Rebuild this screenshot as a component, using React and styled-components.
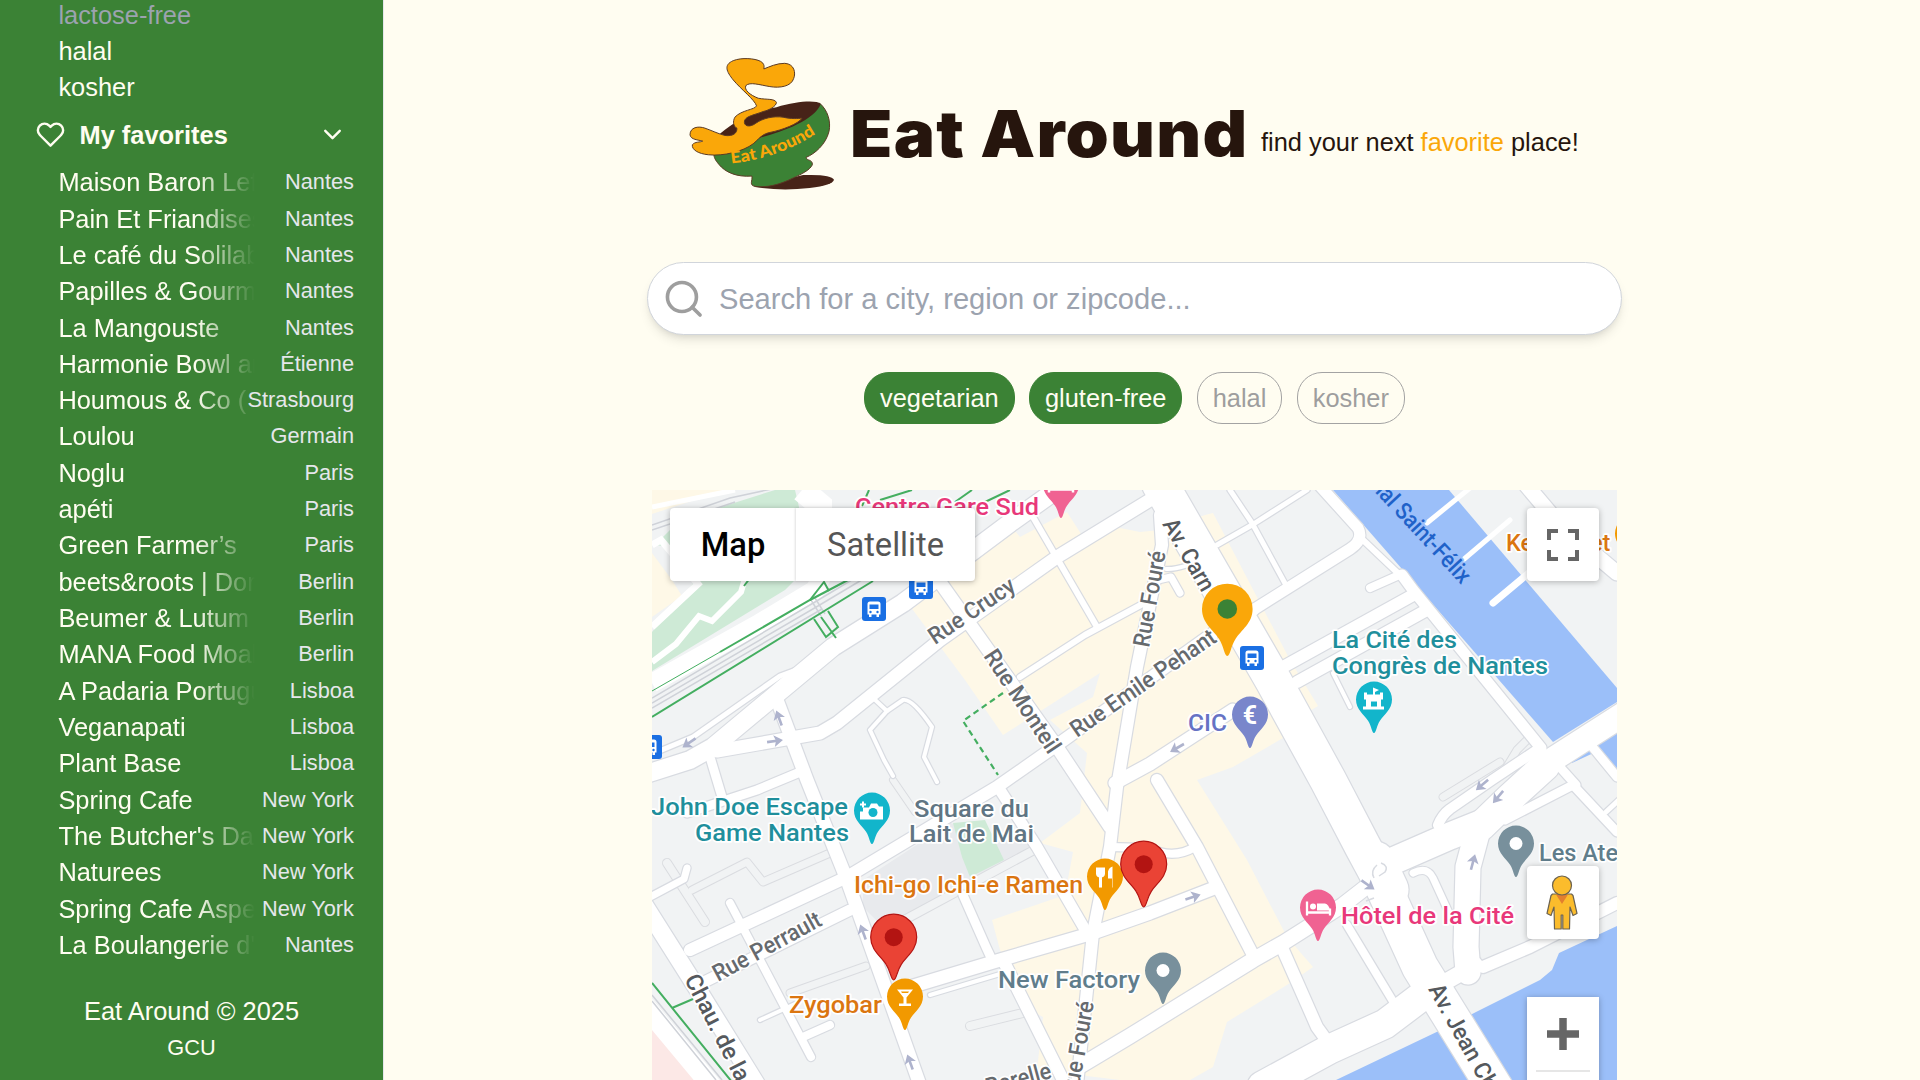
import React from 'react';
import styled, { createGlobalStyle } from 'styled-components';

const green = '#3b8235';
const cream = '#fffdf1';
const orange = '#faa709';
const dark = '#26150d';

const GlobalStyle = createGlobalStyle`
  * { box-sizing: border-box; }
  html, body { margin: 0; padding: 0; height: 1080px; overflow: hidden; }
  body {
    background: ${cream};
    font-family: "Liberation Sans", Arial, sans-serif;
    font-size: 25.41px;
    line-height: 36.33px;
  }
`;

const Page = styled.div`
  display: flex;
  height: 1080px;
  overflow: hidden;
`;

const Sidebar = styled.aside`
  width: 384px;
  flex: none;
  display: flex;
  flex-direction: column;
  background: ${green};
  border-right: 1px solid #e5e7eb;
  color: ${cream};
`;

const DietList = styled.ul`
  list-style: none;
  margin: -3.4px 0 0;
  padding: 0 0 0 58.4px;
`;

const Diet = styled.li`
  color: ${(p) => (p.$muted ? '#9ca3af' : cream)};
`;

const SectionHeader = styled.div`
  display: flex;
  align-items: center;
  height: 58.6px;
  padding: 0 36px;
  font-weight: 700;
`;

const SectionTitle = styled.span`
  flex: 1;
  padding-left: 14.5px;
`;

const Favorites = styled.ul`
  list-style: none;
  margin: 0;
  padding: 0 29px 0 58.4px;
`;

const Favorite = styled.li`
  display: grid;
  grid-template-columns: 2fr minmax(0, 1fr);
  align-items: center;
  height: 36.33px;
`;

const PlaceName = styled.span`
  min-width: 0;
  overflow: hidden;
  white-space: nowrap;
  mask-image: linear-gradient(to right, #000 70%, transparent);
`;

const PlaceCity = styled.span`
  display: flex;
  justify-content: flex-end;
  white-space: nowrap;
  font-size: 21.78px;
  color: #e5e7eb;
`;

const Footer = styled.footer`
  display: flex;
  flex-direction: column;
  align-items: center;
  padding-top: 30px;
`;

const Terms = styled.span`
  font-size: 21.78px;
`;

const Main = styled.main`
  flex: 1;
  display: flex;
  flex-direction: column;
  align-items: center;
  padding-right: 35px;
`;

const Header = styled.header`
  display: flex;
  align-items: flex-start;
  width: 899px;
  height: 262px;
  padding-top: 55px;
`;

const Title = styled.h1`
  margin: 36px 0 0 12px;
  width: 396px;
  flex: none;
  white-space: nowrap;
  font-family: Inter, "Liberation Sans", sans-serif;
  font-weight: 900;
  font-size: 65px;
  line-height: 85px;
  letter-spacing: 1.2px;
  color: ${dark};
  transform: scaleX(1.064);
  transform-origin: left;
`;

const Tagline = styled.p`
  margin: 69px 0 0 15px;
  white-space: nowrap;
  color: ${dark};
`;

const Accent = styled.span`
  color: ${orange};
`;

const SearchBox = styled.div`
  display: flex;
  align-items: center;
  width: 975px;
  height: 73px;
  padding-left: 13.5px;
  border: 1px solid #d1d5db;
  border-radius: 37px;
  background: #fff;
  box-shadow: 0 7px 11px -2px rgba(0, 0, 0, 0.1), 0 4px 7px -4px rgba(0, 0, 0, 0.1);
`;

const SearchInput = styled.input`
  flex: 1;
  margin-left: 14px;
  padding: 2px 0 0;
  border: 0;
  outline: 0;
  background: transparent;
  font: 29.1px "Liberation Sans", Arial, sans-serif;
  &::placeholder { color: #9ca3af; opacity: 1; }
`;

const Chips = styled.div`
  display: flex;
  gap: 14.5px;
  margin: 37px 0 66px;
`;

const Chip = styled.span`
  height: 52px;
  padding: 7.4px 14.9px;
  border: 1px solid ${(p) => (p.$on ? green : '#a3a3a3')};
  border-radius: 25px;
  background: ${(p) => (p.$on ? green : 'transparent')};
  color: ${(p) => (p.$on ? cream : '#9e9e9e')};
`;

const MapFrame = styled.section`
  position: relative;
  width: 965px;
  height: 590px;
  overflow: hidden;
`;

const MapCanvas = styled.svg`
  display: block;
`;

const MapTypes = styled.div`
  position: absolute;
  top: 18px;
  left: 18px;
  display: flex;
  height: 73px;
  border-radius: 4px;
  background: #fff;
  box-shadow: 0 1px 6px rgba(0, 0, 0, 0.28);
`;

const MapType = styled.span`
  display: flex;
  align-items: center;
  justify-content: center;
  width: ${(p) => (p.$active ? 126 : 179)}px;
  padding-top: 2px;
  font-family: Roboto, sans-serif;
  font-size: 32.67px;
  font-weight: ${(p) => (p.$active ? 500 : 400)};
  color: ${(p) => (p.$active ? '#000' : '#565656')};
  box-shadow: ${(p) => (p.$active ? 'none' : '-1px 0 2px rgba(0, 0, 0, 0.12)')};
`;

const Controls = styled.div`
  position: absolute;
  top: 18px;
  right: 18px;
`;

const MapButton = styled.div`
  display: flex;
  align-items: center;
  justify-content: center;
  width: 72px;
  height: 73px;
  margin-bottom: ${(p) => p.$gap || 0}px;
  border-radius: 4px;
  background: #fff;
  box-shadow: 0 1px 6px rgba(0, 0, 0, 0.28);
`;

const ZoomPanel = styled.div`
  display: flex;
  flex-direction: column;
  align-items: center;
  width: 72px;
  height: 146px;
  background: #fff;
  box-shadow: 0 1px 6px rgba(0, 0, 0, 0.28);
`;

const ZoomIn = styled.div`
  display: flex;
  align-items: center;
  justify-content: center;
  width: 54px;
  height: 75px;
  border-bottom: 2px solid #e6e6e6;
`;

const favorites = [
  ['Maison Baron Lefèvre', 'Nantes'],
  ['Pain Et Friandises', 'Nantes'],
  ['Le café du Solilab', 'Nantes'],
  ['Papilles & Gourmandises', 'Nantes'],
  ['La Mangouste', 'Nantes'],
  ['Harmonie Bowl and', 'Étienne'],
  ['Houmous & Co (', 'Strasbourg'],
  ['Loulou', 'Germain'],
  ['Noglu', 'Paris'],
  ['apéti', 'Paris'],
  ['Green Farmer’s', 'Paris'],
  ['beets&roots | Dorotheen', 'Berlin'],
  ['Beumer & Lutum', 'Berlin'],
  ['MANA Food Moabit', 'Berlin'],
  ['A Padaria Portuguesa', 'Lisboa'],
  ['Veganapati', 'Lisboa'],
  ['Plant Base', 'Lisboa'],
  ['Spring Cafe', 'New York'],
  ["The Butcher's Daughter", 'New York'],
  ['Naturees', 'New York'],
  ['Spring Cafe Aspen', 'New York'],
  ["La Boulangerie d'Olivier", 'Nantes'],
];

// Streets: [path, width]
const roads = [
  ['M1230 490L1252 523L1287 587', 5],
  ['M1217 545L1252 525L1307 490', 5],
  ['M1333 673L1350 707', 4],
  ['M1033 517L1097 627', 6],
  ['M1020 677L1085 635L1150 600', 6],
  ['M1166 569Q1180 570 1210 556', 4],
  ['M1158 580L1171 577L1180 593', 7],
  ['M657 752L693 737L780 676L815 663', 5],
  ['M872 697L887 711L870 730L884 760L893 776', 4],
  ['M887 711L903 700Q912 698 932 727L924 757L937 782', 4],
  ['M710 757L722 797', 9],
  ['M687 813L757 790L805 770', 9],
  ['M650 897L684 879L687 868', 7],
  ['M730 903L811 1057', 8],
  ['M803 1037L830 1025', 8],
  ['M760 1020L795 1004', 4],
  ['M700 984L850 910', 11],
  ['M963 895L986 947L993 962', 9],
  ['M1003 960L1063 1080', 12],
  ['M930 995L1000 974', 4],
  ['M1110 847L1150 848Q1173 860 1195 847', 8],
  ['M1347 925L1394 1003', 8],
  ['M1413 873Q1427 866 1433 878L1450 915', 7],
  ['M1370 588L1397 576', 8],
  ['M1363 540L1402 577', 6],
  ['M1320 486L1358 528Q1364 540 1350 549L1253 610', 11],
  ['M1402 575L1413 590L1541 748', 11],
  ['M1415 594L1283 667', 12],
  ['M1425 611L1297 682', 12],
  ['M1438 825Q1442 815 1450 809L1492 780L1540 748', 10],
  ['M1505 820L1573 785L1617 832', 9],
  ['M1558 765L1576 785', 9],
  ['M1590 744L1617 777', 9],
  ['M1606 812L1620 799', 5],
  ['M1527 486L1560 525L1617 573', 15],
  ['M690 950L847 877L997 787L1057 745L1213 633L1253 610', 12],
  ['M1233 710L1150 764L1115 783', 13],
  ['M1157 780L1197 847L1253 955', 12],
  ['M1000 790L1037 847L1087 933', 11],
  ['M910 987L1000 960L1093 933L1150 913L1217 887', 13],
  ['M1080 1066L1130 1036L1253 960L1283 943L1343 905L1370 884', 15],
  ['M1283 950L1317 1027L1330 1045', 12],
  ['M777 700L807 780L847 880L920 1085', 13],
  ['M640 898L700 993L757 1085', 17],
  ['M1160 515L1162 545L1137 667L1117 787L1110 847L1093 933L1077 1085', 12],
  ['M937 578L1057 747L1110 827', 13],
  ['M717 751L820 733L837 723L940 640L1057 557L1150 500', 13],
  ['M640 776L690 760L713 747L767 702L797 677L833 647L903 603L1010 523L1062 486', 18],
  ['M1483 967L1530 947L1617 903', 12],
  ['M1479 826L1468 867L1466 947L1468 972', 25],
  ['M1440 985L1475 965', 16],
  ['M1262 1086L1330 1049L1385 1024L1430 990', 29],
  ['M1372 872L1395 860L1450 836L1485 822', 27],
  ['M1481 826L1510 798L1545 766', 29],
  ['M1540 768L1555 758L1622 715', 24],
  ['M1160 484L1273 680L1328 780L1363 847L1377 873L1420 967L1496 1090', 36],
  ['M1375 862L1388 890', 41],
];

// Footpaths that share the ground colour, seen only by their outline
const lanes = [
  ['M667 863L705 922', 8],
  ['M692 890L747 862L763 882L830 853', 7],
  ['M895 925L1034 850', 8],
  ['M790 993L866 966', 7],
  ['M970 1026L1023 1013', 8],
  ['M1505 770L1517 750L1530 737', 7],
  ['M893 780L915 812', 6],
  ['M1443 797L1500 762', 7],
];

const labels = [
  ['Centre Gare Sud', 855, 515, 184, 0, '#e8387a'],
  ['La Cité des', 1332, 648, 125, 0, '#1f8f9c'],
  ['Congrès de Nantes', 1332, 673.5, 216, 0, '#1f8f9c'],
  ['CIC', 1188, 731, 39, 0, '#6672c4'],
  ['John Doe Escape', 651, 815, 197, 0, '#1f8f9c'],
  ['Game Nantes', 695, 841, 154, 0, '#1f8f9c'],
  ['Square du', 914, 816.5, 115, 0, '#607583'],
  ['Lait de Mai', 909, 842, 125, 0, '#607583'],
  ['Ichi-go Ichi-e Ramen', 854, 893, 229, 0, '#db7611'],
  ['Zygobar', 789, 1013, 93, 0, '#db7611'],
  ['New Factory', 998, 988, 142, 0, '#607d8b'],
  ['Hôtel de la Cité', 1341, 924, 173, 0, '#e8387a'],
  ['Les Atel', 1539, 861, 0, 0, '#607d8b'],
  ['Ke', 1506, 551, 0, 0, '#db7611'],
  ['et', 1590, 551, 0, 0, '#db7611'],
  ['Rue Crucy', 935, 645, 99, -34, '#666a6e'],
  ['Rue Monteil', 983, 656, 119, 56.5, '#666a6e'],
  ['Rue Emile Pehant', 1077, 738, 171, -34.5, '#666a6e'],
  ['Rue Fouré', 1149, 648, 97, -80, '#666a6e'],
  ['Av. Carn', 1162, 524, 80, 60, '#55595d'],
  ['nal Saint-Félix', 1370, 487, 134, 47, '#1f62c9', '#9bbff9'],
  ['Rue Perrault', 718, 982, 120, -28.5, '#666a6e'],
  ['Chau. de la Mad', 684, 979, 0, 63, '#55595d'],
  ['Rue Fouré', 1077, 1099, 98, -80, '#666a6e'],
  ['Barelle', 988, 1095, 67, -15, '#666a6e'],
  ['Av. Jean Cha', 1428, 989, 129, 61, '#55595d'],
];

const arrows = [
  [779, 718, -110], [775, 741, -8], [689, 743, 145], [1177, 748, 150],
  [863, 932, -110], [910, 1062, -110], [1193, 897, -18], [1368, 885, 35],
  [1482, 785, 140], [1498, 797, 130], [1473, 862, -75],
];

const stops = [[874, 609], [921, 587], [650, 747], [1252, 658]];

const pinPath =
  'M0 0C-.12 0 -.13 -.38 -.33 -.68C-.55 -1.03 -1 -1.3 -1 -1.86A1 1 0 0 1 1 -1.86C1 -1.3 .55 -1.03 .33 -.68C.13 -.38 .12 0 0 0Z';

function Pin({ x, y, r = 18, fill, stroke, children }) {
  return (
    <g transform={`translate(${x} ${y})`}>
      <path d={pinPath} transform={`scale(${r})`} fill={fill} stroke={stroke} strokeWidth={1.2 / r} />
      <g transform={`translate(0 ${-1.86 * r})`}>{children}</g>
    </g>
  );
}

function BusStop({ x, y }) {
  return (
    <g transform={`translate(${x} ${y})`}>
      <rect x="-12" y="-12" width="24" height="24" rx="3" fill="#1a6fe3" />
      <path d="M-6.5 -5Q-6.5 -7.5 -4 -7.5H4Q6.5 -7.5 6.5 -5V5.5H5V8H2.5V5.5H-2.5V8H-5V5.5H-6.5Z" fill="#fff" />
      <path d="M-4.5 -4.5H4.5V0H-4.5Z" fill="#1a6fe3" />
      <circle cx="-3.5" cy="3" r="1.2" fill="#1a6fe3" />
      <circle cx="3.5" cy="3" r="1.2" fill="#1a6fe3" />
    </g>
  );
}

function CityMap() {
  return (
    <MapCanvas width="965" height="590" viewBox="652 490 965 590">
      <rect x="652" y="490" width="965" height="590" fill="#f1f3f4" />
      <g fill="#fef8e7">
        <path d="M652 490H725L652 514Z" />
        <path d="M652 553L672 580L682 596L652 617Z" />
        <path d="M975 560L1010 525L1020 537L1067 512L1083 537L1105 525L1140 532L1160 530L1205 515L1213 513L1290 660L1318 706L1308 712L1283 738L1233 767L1197 780L1247 860L1287 937L1313 967L1290 983L1227 1022L1213 1067L1190 1080L1120 1080L1037 1070L1043 1017L1030 1010L1010 967L1000 950L992 920L1065 895L1073 852L1040 843L1080 813L1087 753L1050 720L1093 697L1100 673L1003 735L965 680L910 606L940 585Z" />
      </g>
      <path d="M775 490H795L799 507L794 581L785 590L652 671V632L696 580L672 547L655 545L680 520Z" fill="#ceead6" />
      <path d="M863 880L950 823L1034 843L965 893L883 927L863 907Z" fill="#e8eaed" />
      <path d="M953 823L985 820L1004 860L970 877L962 857Z" fill="#ceead6" />
      <path d="M652 1027L695 1080H652Z" fill="#fce8e6" />
      <g fill="#9bbff9">
        <path d="M1333 490L1449 490L1617 688V702L1553 742Z" />
        <path d="M1592 743L1617 727V770Z" />
        <path d="M1567 757L1590 745L1600 750L1572 763Z" />
        <path d="M1336 1080L1445 1028L1476 1012L1540 980L1552 970L1559 953L1617 926V1080Z" />
      </g>

      <g fill="none" stroke="#fff">
        <path d="M652 662L676 644L699 616L712 621L741 592L746 575" strokeWidth="6" />
        <path d="M652 545L661 540L698 584L652 627" strokeWidth="7" />
        <path d="M652 683L760 623L815 590L830 560" strokeWidth="19" />
        <path d="M802 490L820 505V575" strokeWidth="24" />
        <path d="M652 507L735 490" strokeWidth="5" />
        <path d="M640 1000L715 1090" strokeWidth="20" />
      </g>
      <g fill="none" stroke="#cfd2d8" strokeWidth="1.5">
        <path d="M652 525L730 498L790 485" />
        <path d="M652 530L735 502" />
        <path d="M652 698L815 602L865 572" />
        <path d="M652 703L818 606L870 575" />
        <path d="M652 708L822 609" />
        <path d="M652 995L722 1080M652 1001L716 1080" />
        <path d="M811 600L821 616M815 598L825 614" />
      </g>

      <g fill="none" strokeLinejoin="round" strokeLinecap="round">
        {lanes.map(([d, w]) => <path key={d} d={d} stroke="#dadce0" strokeWidth={w + 2} />)}
        {lanes.map(([d, w]) => <path key={d} d={d} stroke="#f1f3f4" strokeWidth={w} />)}
        {roads.map(([d, w]) => <path key={d} d={d} stroke="#d8dbe1" strokeWidth={w + 2.4} />)}
        {roads.map(([d, w]) => <path key={d} d={d} stroke="#fff" strokeWidth={w} />)}
        <path d="M1427 523L1470 488M1463 560L1510 520" stroke="#fff" strokeWidth="5" />
        <path d="M1493 603L1530 572" stroke="#fff" strokeWidth="7" />
      </g>

      <g fill="none" stroke="#44ae60" strokeWidth="2">
        <path d="M652 717L873 581" />
        <path d="M652 691L720 652" strokeWidth="1" />
        <path d="M720 652L810 600L848 580" />
        <path d="M810 600L824 582L829 591M814 619L826 637L838 627L828 611M821 617L836 638" />
        <path d="M869 490L862 506M880 500L912 490M955 502L972 490M985 502L1010 490" />
        <path d="M744 586L750 578" />
        <path d="M652 983L732 1082M672 1008L693 999" />
        <path d="M1003 693L963 721L998 775" strokeDasharray="6 4" strokeWidth="2.2" />
      </g>

      <g fill="none" stroke="#aeb3cd" strokeWidth="2.6">
        {arrows.map(([x, y, a]) => (
          <g key={x} transform={`translate(${x} ${y}) rotate(${a})`}>
            <path d="M-8 0H4" />
            <path d="M-1 -6L8 0L-1 6L1 0Z" fill="#aeb3cd" stroke="none" />
          </g>
        ))}
      </g>
      <g fill="none" stroke="#d8dbe1" strokeWidth="1.5">
        <path d="M1374 878Q1370 871 1377 865M1381 863Q1389 866 1385 872L1379 876" />
        <path d="M1366 901L1374 898" />
      </g>

      {stops.map(([x, y]) => <BusStop key={x} x={x} y={y} />)}

      <g fontFamily="Roboto, sans-serif" fontSize="23.5" fontWeight="500" strokeLinejoin="round">
        {labels.map(([text, x, y, len, angle, fill, halo]) => (
          <text
            key={text + x}
            transform={`translate(${x} ${y}) rotate(${angle})`}
            textLength={len || undefined}
            lengthAdjust="spacingAndGlyphs"
            fill={fill}
            stroke={halo || '#fff'}
            strokeWidth="3.5"
            paintOrder="stroke"
          >
            {text}
          </text>
        ))}
      </g>

      <Pin x={1061} y={518} fill="#f06292">
        <path d="M-12 5H12M-12 -7V8M12 5V8" stroke="#fff" strokeWidth="2.5" />
      </Pin>
      <Pin x={1374} y={733} fill="#12b5cb">
        <path d="M-1 -12L5 -9.5L1 -7.5V-5H6V-7H9V0H7V7H10V10H-11V7H-8V0H-10V-7H-7V-5H-1Z" fill="#fff" />
        <path d="M-3 2H3V7H-3Z" fill="#12b5cb" />
      </Pin>
      <Pin x={1250} y={748} fill="#7986cb">
        <text textAnchor="middle" y="9" fontFamily="Roboto, sans-serif" fontSize="25" fontWeight="700" fill="#fff">€</text>
      </Pin>
      <Pin x={872} y={844} fill="#12b5cb">
        <path d="M-9 -3H-3L-1 -7H5L7 -4H11V9H-12V1H-9Z" fill="#fff" />
        <circle cx="1" cy="2" r="4.5" fill="#12b5cb" />
        <path d="M-9 -9V-3M-12 -6H-6" stroke="#fff" strokeWidth="2" />
      </Pin>
      <Pin x={1105} y={910} fill="#f29900">
        <path d="M-9 -9V-3Q-9 1 -4.500 1Q0 1 0 -3V-9Z" fill="#fff" />
        <path d="M-4.5 0V11" stroke="#fff" strokeWidth="3" />
        <path d="M7 11V2H3V-5Q4 -9 7.500 -10V11Z" fill="#fff" />
      </Pin>
      <Pin x={1163} y={1004} fill="#78909c"><circle r="6.5" fill="#fff" /></Pin>
      <Pin x={1516} y={877} fill="#78909c"><circle r="6.5" fill="#fff" /></Pin>
      <Pin x={1318} y={941} fill="#f06292">
        <path d="M-11 -6V8M-11 5H12V8M12 5V1" stroke="#fff" strokeWidth="2.3" fill="none" />
        <circle cx="-5" cy="-1" r="3" fill="#fff" />
        <path d="M-1 -4H7Q11 -3 12 3H-1Z" fill="#fff" />
      </Pin>
      <Pin x={1633} y={567} fill="#f29900" />
      <Pin x={1143.7} y={907} r={23} fill="#ea4335" stroke="#b31412"><circle r="9" fill="#b31412" /></Pin>
      <Pin x={893.7} y={980} r={23} fill="#ea4335" stroke="#b31412"><circle r="9" fill="#b31412" /></Pin>
      <Pin x={905} y={1030} fill="#f29900">
        <path d="M-8 -7H8L1.5 1V7H6V9.5H-6V7H-1.5V1Z" fill="#fff" />
        <path d="M-4 -5H4L3 -3.5H-3Z" fill="#f29900" />
      </Pin>
      <Pin x={1227.3} y={656} r={25.3} fill={orange}><circle r="9.8" fill={green} /></Pin>
    </MapCanvas>
  );
}

const LogoDrawing = styled.svg`
  flex: none;
  width: 153px;
  height: 138px;
`;

function Logo() {
  return (
    <LogoDrawing viewBox="45 45 460 415">
      <path d="M250 441Q330 455 420 445Q490 436 493 420Q485 403 400 406Z" fill="#472318" />
      <path
        d="M450 190C475 212 484 245 478 275C468 315 435 342 409 353C411 364 429 358 428 375C420 392 395 403 370 415C330 435 290 445 256 440C236 436 249 424 246 409C200 413 165 397 147 374C135 360 132 352 132 345L275 292Z"
        fill={green}
        stroke="#5a3a24"
        strokeWidth="3"
      />
      <path d="M150 282C200 240 250 215 320 202C380 184 440 180 453 192C435 240 340 275 275 292L200 305Z" fill="#472318" />
      <path
        d="M60 285C60 262 85 258 105 265C125 272 145 282 165 287C190 290 202 280 201 265C190 260 188 245 195 232C215 210 255 210 260 198C255 180 215 150 190 120C170 95 160 75 190 62C215 52 255 55 272 64C285 72 283 80 282 87C300 80 320 70 345 70C375 72 378 100 372 115C365 140 330 145 300 140C270 135 240 125 228 137C222 150 240 165 265 175C290 180 315 175 320 188C318 200 300 210 280 215C255 225 230 228 224 242C220 260 240 264 258 250C280 235 310 228 340 232C365 238 385 236 397 235C385 252 340 270 300 278C275 283 265 300 250 312C220 335 160 350 115 345C85 342 65 330 67 315C75 305 90 308 98 304C85 300 62 300 60 285Z"
        fill={orange}
        stroke="#5a3a24"
        strokeWidth="3"
      />
      <path id="bowl-curve" d="M184 371Q330 356 448 276" fill="none" />
      <text fontFamily="Lato, sans-serif" fontWeight="900" fontSize="50" fill={orange}>
        <textPath href="#bowl-curve" textLength="272" lengthAdjust="spacingAndGlyphs">Eat Around</textPath>
      </text>
    </LogoDrawing>
  );
}

function Pegman() {
  return (
    <svg width="34" height="56" viewBox="0 0 34 56">
      <path d="M6.500 19H25.500L27 20.500L31 38.500L27 40.500L24 32L23.500 54H16.800V40H15.200V54H8.500L8 32L5 40.500L1 38.500L5 20.500Z" fill="#fbbc2c" stroke="#6b6250" strokeWidth="1.2" strokeLinejoin="round" />
      <path d="M10 19.5H22L16 29Z" fill="#e37f2e" />
      <circle cx="16" cy="10.5" r="9.5" fill="#fbbc2c" stroke="#6b6250" strokeWidth="1.2" />
    </svg>
  );
}

export default function App() {
  return (
    <>
      <GlobalStyle />
      <Page>
        <Sidebar>
          <DietList>
            <Diet $muted>lactose-free</Diet>
            <Diet>halal</Diet>
            <Diet>kosher</Diet>
          </DietList>
          <SectionHeader>
            <svg width="29" height="29" viewBox="0 0 24 24" fill="none" stroke={cream} strokeWidth="2" strokeLinejoin="round">
              <path d="M20.84 4.61a5.5 5.5 0 0 0-7.78 0L12 5.67l-1.06-1.06a5.5 5.5 0 0 0-7.78 7.78l1.06 1.06L12 21.23l7.78-7.78 1.06-1.06a5.5 5.5 0 0 0 0-7.78z" />
            </svg>
            <SectionTitle>My favorites</SectionTitle>
            <svg width="29" height="29" viewBox="0 0 24 24" fill="none" stroke={cream} strokeWidth="2" strokeLinecap="round" strokeLinejoin="round">
              <path d="M6 9l6 6 6-6" />
            </svg>
          </SectionHeader>
          <Favorites>
            {favorites.map(([name, city]) => (
              <Favorite key={name}>
                <PlaceName>{name}</PlaceName>
                <PlaceCity>{city}</PlaceCity>
              </Favorite>
            ))}
          </Favorites>
          <Footer>
            <span>Eat Around © 2025</span>
            <Terms>GCU</Terms>
          </Footer>
        </Sidebar>
        <Main>
          <Header>
            <Logo />
            <Title>Eat Around</Title>
            <Tagline>find your next <Accent>favorite</Accent> place!</Tagline>
          </Header>
          <SearchBox>
            <svg width="43.5" height="43.5" viewBox="0 0 24 24" fill="none" stroke="#9e9e9e" strokeWidth="2" strokeLinecap="round">
              <circle cx="11" cy="11" r="8" />
              <path d="M21 21l-4.35-4.35" />
            </svg>
            <SearchInput placeholder="Search for a city, region or zipcode..." />
          </SearchBox>
          <Chips>
            <Chip $on>vegetarian</Chip>
            <Chip $on>gluten-free</Chip>
            <Chip>halal</Chip>
            <Chip>kosher</Chip>
          </Chips>
          <MapFrame>
            <CityMap />
            <MapTypes>
              <MapType $active>Map</MapType>
              <MapType>Satellite</MapType>
            </MapTypes>
            <Controls>
              <MapButton $gap={285}>
                <svg width="32" height="32" viewBox="0 0 32 32" fill="none" stroke="#666" strokeWidth="4">
                  <path d="M2 11V2H11M21 2H30V11M30 21V30H21M11 30H2V21" />
                </svg>
              </MapButton>
              <MapButton $gap={58}><Pegman /></MapButton>
              <ZoomPanel>
                <ZoomIn>
                  <svg width="32" height="32" viewBox="0 0 32 32" stroke="#666" strokeWidth="7.5">
                    <path d="M16 0V32M0 16H32" />
                  </svg>
                </ZoomIn>
              </ZoomPanel>
            </Controls>
          </MapFrame>
        </Main>
      </Page>
    </>
  );
}
